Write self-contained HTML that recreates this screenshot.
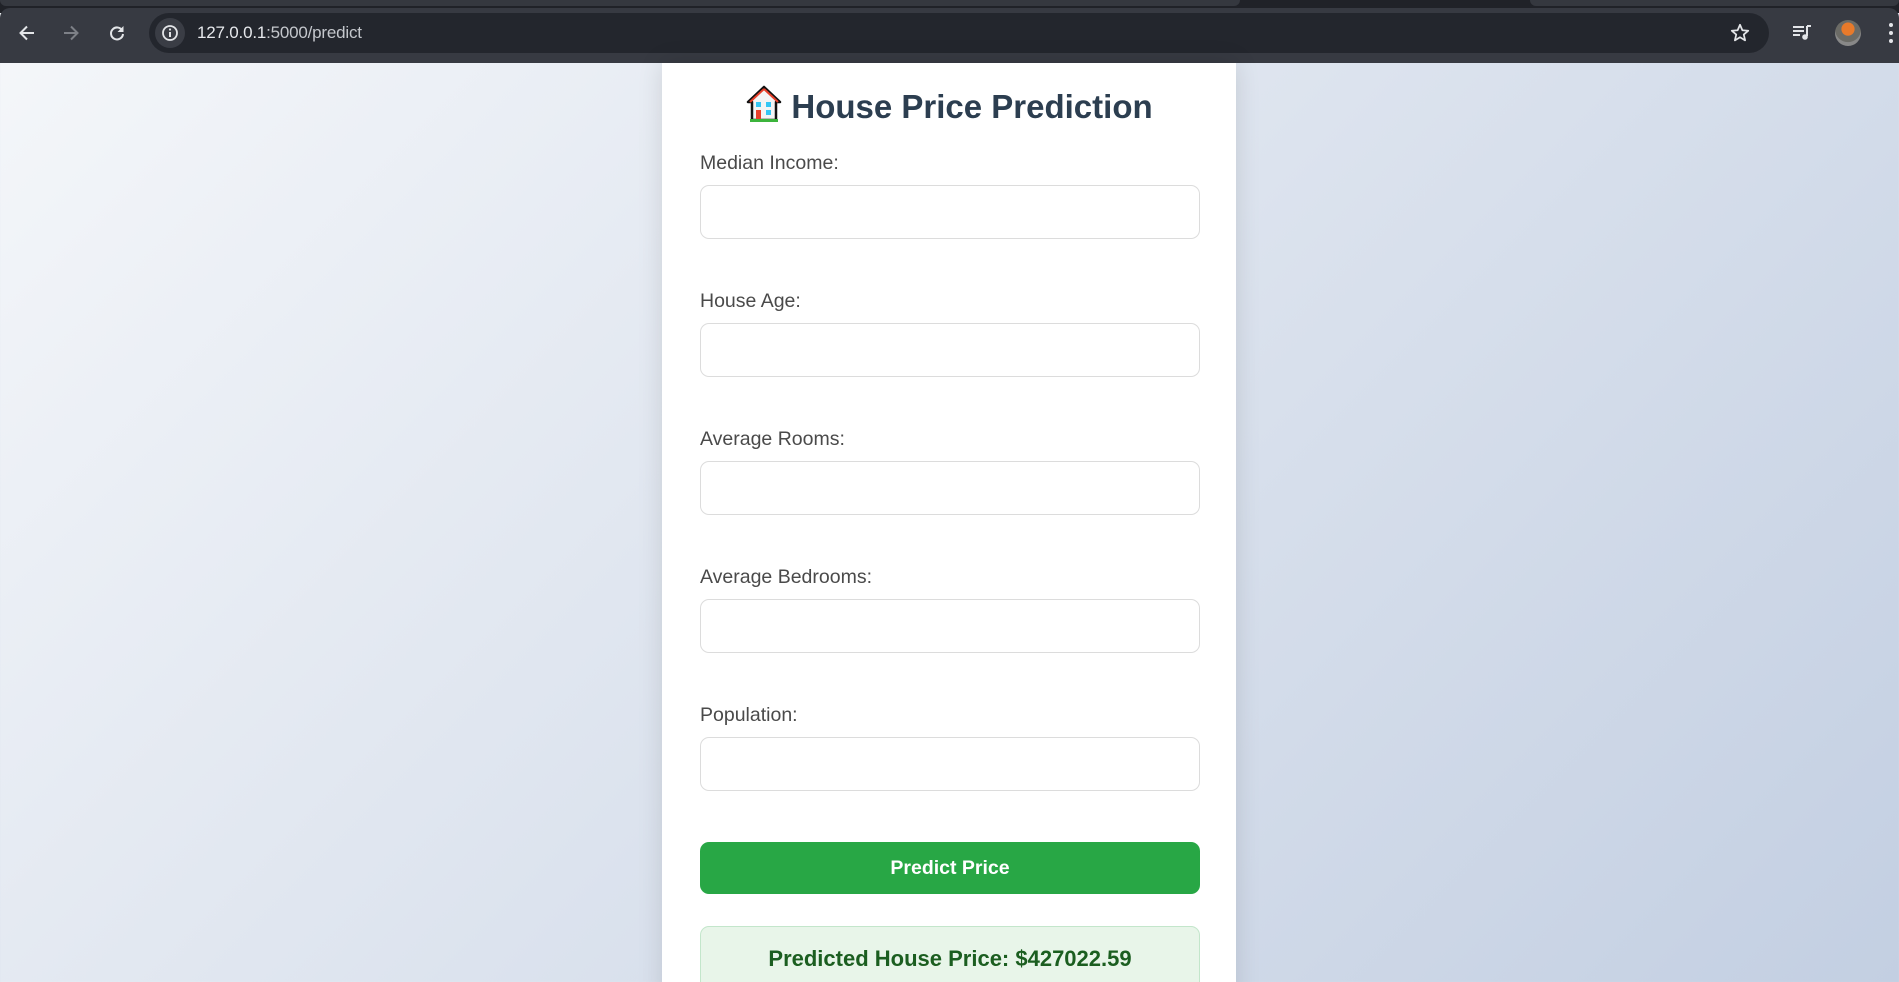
<!DOCTYPE html>
<html><head><meta charset="utf-8"><style>
*{box-sizing:border-box;margin:0;padding:0}
html,body{width:1899px;height:982px;overflow:hidden;font-family:"Liberation Sans",Arial,sans-serif}
body{background:linear-gradient(135deg,#f5f7fa 0%,#c3cfe2 100%);position:relative}
.tabs{position:absolute;left:0;top:0;width:1899px;height:13px;background:#202228}
.tabs .t{position:absolute;top:0;height:6px;background:#35383f;border-radius:0 0 10px 10px}
.bar{position:absolute;left:0;top:8px;width:1899px;height:55px;background:#373a42;border-radius:10px 10px 0 0}
.omni{position:absolute;left:149px;top:13px;width:1620px;height:40px;border-radius:20px;background:#23262d}
.url{position:absolute;left:197px;top:23px;font-size:17px;color:#e6e8ec;letter-spacing:-0.2px}
.card{position:absolute;left:662px;top:63px;width:574px;height:940px;background:#fff;box-shadow:0 0 24px rgba(0,0,0,.12)}
h1{position:absolute;left:0;width:574px;top:21px;text-align:center;font-size:33px;font-weight:bold;color:#2c3e50;line-height:40px}
h1 svg{vertical-align:-6px;margin-right:8px}
label{position:absolute;left:700px;font-size:19.5px;color:#4a4a4a}
.inp{position:absolute;left:700px;width:500px;height:54px;border:1px solid #dcdcdc;border-radius:9px;background:#fff}
.btn{position:absolute;left:700px;top:842px;width:500px;height:52px;background:#28a745;border-radius:9px;color:#fff;font-weight:bold;font-size:19.5px;text-align:center;line-height:52px}
.res{position:absolute;left:700px;top:926px;width:500px;height:80px;background:#e8f5e9;border:1px solid #c3e6cb;border-radius:9px;color:#1b5e20;font-weight:bold;font-size:22px;text-align:center;padding-top:19px}
</style></head><body>
<div class="tabs"><div class="t" style="left:0;width:1240px"></div><div class="t" style="left:1530px;width:369px"></div></div>
<div class="bar"></div>
<svg style="position:absolute;left:17px;top:23px" width="20" height="20" viewBox="0 0 20 20"><path d="M17 10H4M10 3.5L3.5 10 10 16.5" stroke="#e3e5e8" stroke-width="2" fill="none"/></svg>
<svg style="position:absolute;left:61px;top:23px" width="20" height="20" viewBox="0 0 20 20"><path d="M3 10H16M10 3.5L16.5 10 10 16.5" stroke="#7d8087" stroke-width="2" fill="none"/></svg>
<svg style="position:absolute;left:107px;top:23px" width="20" height="20" viewBox="0 0 20 20"><path d="M15.5 8A6 6 0 1 0 16 11" stroke="#e3e5e8" stroke-width="2" fill="none"/><path d="M16.5 3v6h-6z" fill="#e3e5e8"/></svg>
<div class="omni"></div>
<div style="position:absolute;left:155px;top:18px;width:30px;height:30px;border-radius:15px;background:#3a3d45"></div>
<svg style="position:absolute;left:161px;top:24px" width="18" height="18" viewBox="0 0 18 18"><circle cx="9" cy="9" r="7" stroke="#e3e5e8" stroke-width="1.8" fill="none"/><path d="M9 8v5" stroke="#e3e5e8" stroke-width="2"/><circle cx="9" cy="5.5" r="1.1" fill="#e3e5e8"/></svg>
<div class="url">127.0.0.1<span style="color:#c4c7cc">:5000/predict</span></div>
<svg style="position:absolute;left:1729px;top:22px" width="22" height="22" viewBox="0 0 24 24"><path d="M12 3l2.6 6 6.4.5-4.9 4.2 1.5 6.3L12 16.6 6.4 20l1.5-6.3L3 9.5l6.4-.5z" stroke="#e3e5e8" stroke-width="1.9" fill="none" stroke-linejoin="round"/></svg>
<svg style="position:absolute;left:1791px;top:22px" width="22" height="22" viewBox="0 0 22 22"><path d="M2 5h11M2 9h11M2 13h7" stroke="#e3e5e8" stroke-width="2"/><path d="M16 4v10" stroke="#e3e5e8" stroke-width="2"/><circle cx="14" cy="15" r="2.8" fill="#e3e5e8"/><path d="M16 4h4" stroke="#e3e5e8" stroke-width="2"/></svg>
<div style="position:absolute;left:1835px;top:20px;width:26px;height:26px;border-radius:13px;background:radial-gradient(circle at 50% 35%,#e87a2a 0 30%,#6b6b66 32% 60%,#888 62%)"></div>
<svg style="position:absolute;left:1887px;top:21px" width="8" height="24" viewBox="0 0 8 24"><circle cx="4" cy="4" r="2" fill="#e3e5e8"/><circle cx="4" cy="12" r="2" fill="#e3e5e8"/><circle cx="4" cy="20" r="2" fill="#e3e5e8"/></svg>

<div class="card"><h1><svg width="38" height="40" viewBox="0 0 38 40"><path d="M19 3L3 18h4v18h24V18h4z" fill="#f4f4f4" stroke="#111" stroke-width="2.5" stroke-linejoin="round"/><path d="M19 5L5 18" stroke="#e8402a" stroke-width="2"/><path d="M19 5L33 18" stroke="#e8402a" stroke-width="2"/><rect x="11" y="18" width="5" height="5" fill="#35c6f4"/><rect x="21" y="18" width="5" height="5" fill="#35c6f4"/><rect x="21" y="26" width="5" height="5" fill="#35c6f4"/><rect x="11" y="26" width="5" height="10" fill="#e8402a"/><rect x="5" y="35" width="28" height="3" fill="#3cb43c"/></svg>House Price Prediction</h1></div>

<label style="top:152px">Median Income:</label><div class="inp" style="top:185px"></div>
<label style="top:290px">House Age:</label><div class="inp" style="top:323px"></div>
<label style="top:428px">Average Rooms:</label><div class="inp" style="top:461px"></div>
<label style="top:566px">Average Bedrooms:</label><div class="inp" style="top:599px"></div>
<label style="top:704px">Population:</label><div class="inp" style="top:737px"></div>
<div class="btn">Predict Price</div>
<div class="res">Predicted House Price: $427022.59</div>
</body></html>
